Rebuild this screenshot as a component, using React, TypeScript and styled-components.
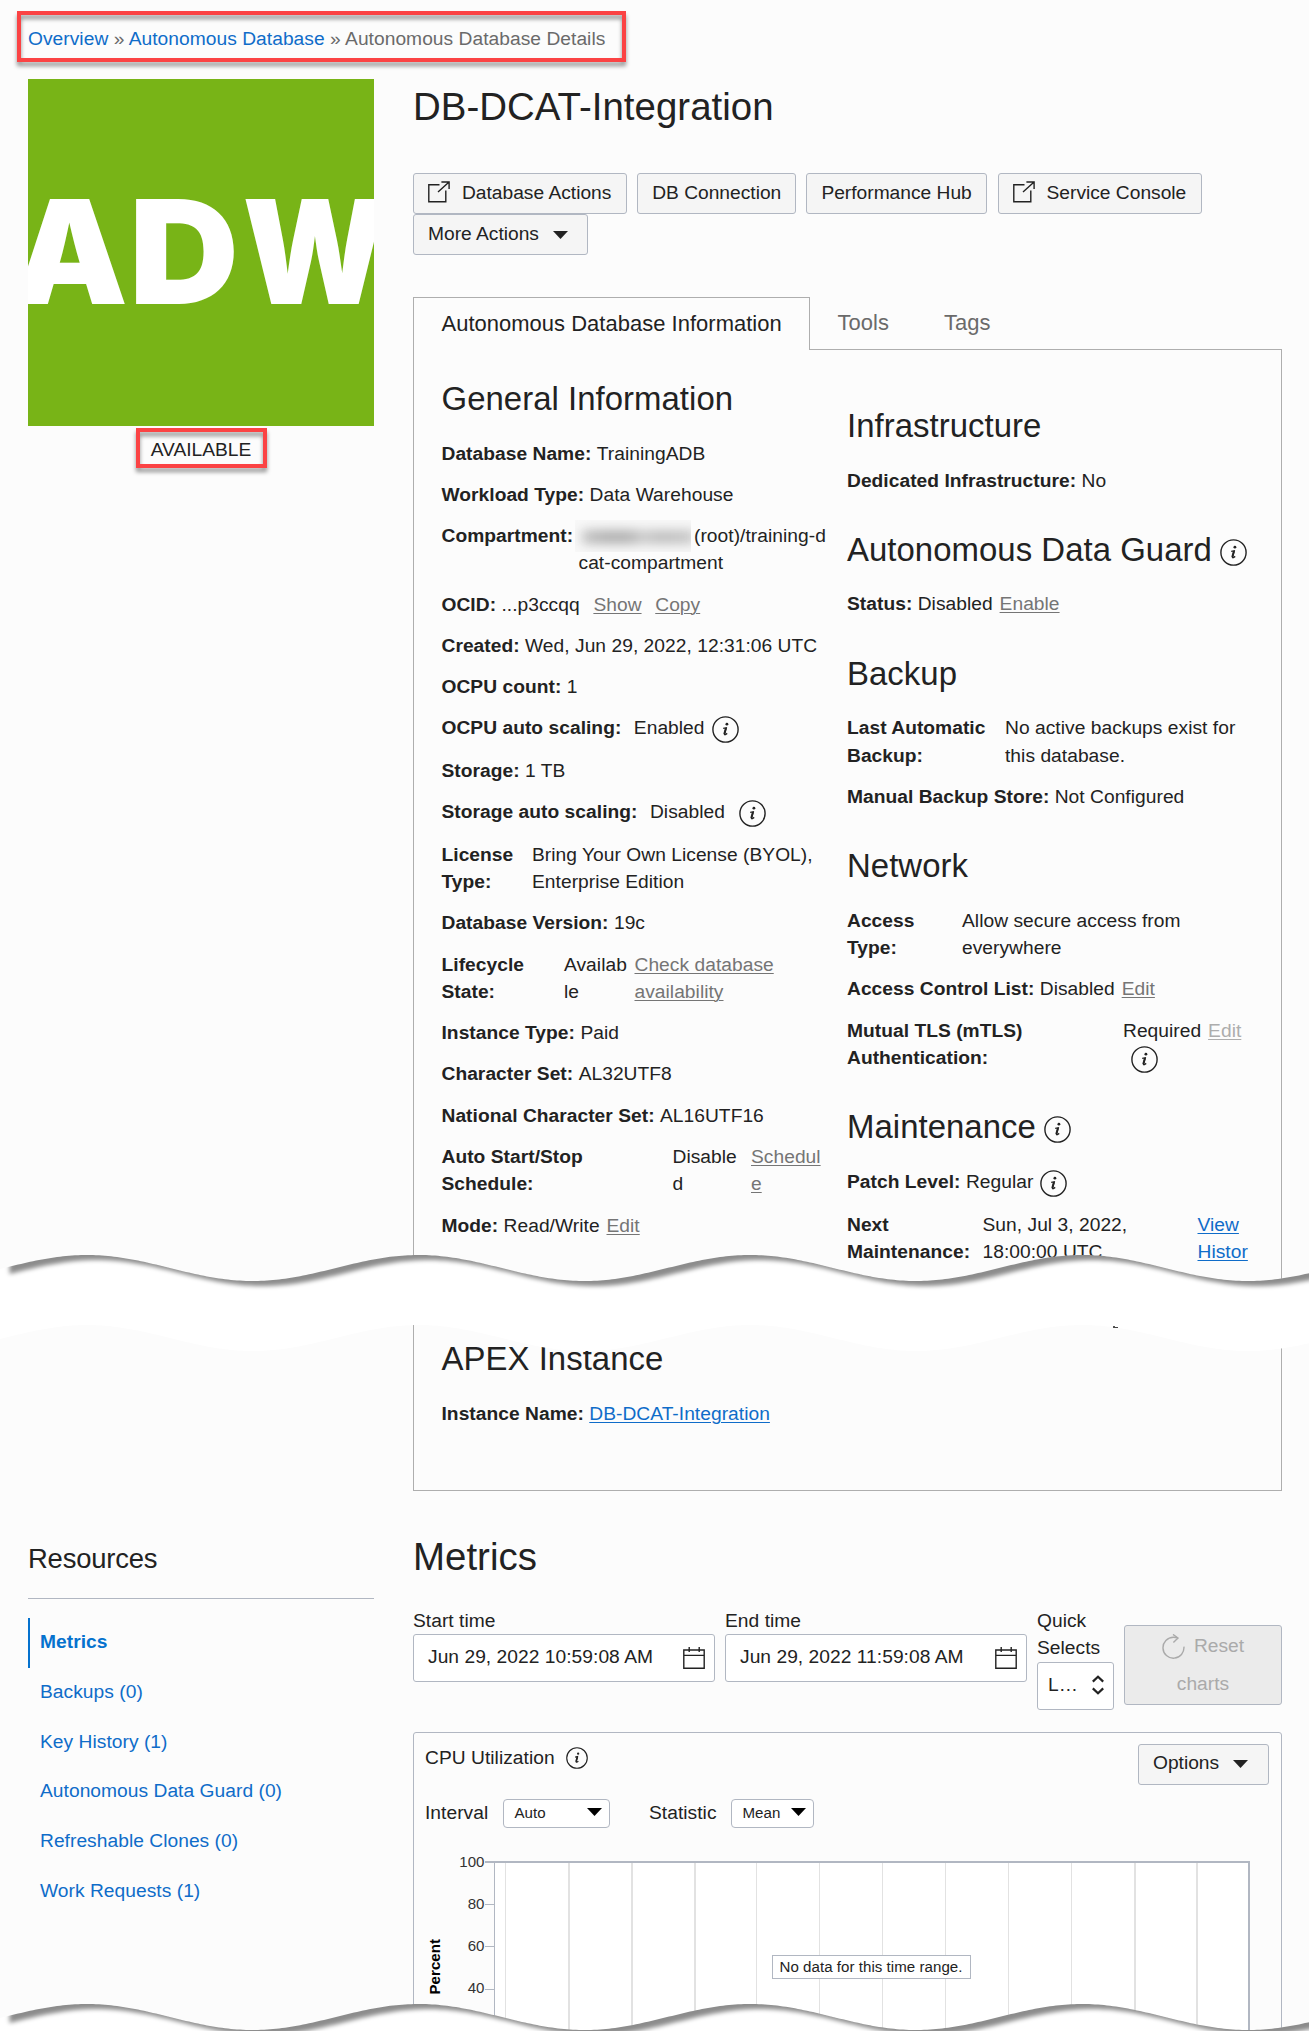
import React from "react";
import styled, { createGlobalStyle, css } from "styled-components";

const GlobalStyle = createGlobalStyle`
  *, *::before, *::after { box-sizing: border-box; }
  body {
    margin: 0;
    background: #fcfcfc;
    color: #222;
    font-family: "Liberation Sans", Arial, Helvetica, sans-serif;
    font-size: 19.2px;
    line-height: 27.5px;
    letter-spacing: 0.04px;
  }
  h1, h2, h3, p, ul { margin: 0; padding: 0; font-weight: 400; }
  button { font: inherit; color: inherit; }
`;

const LINK = "#0f6cc9";
const LINE = "#b1b7c2";

/* ---------- page frame ---------- */

const Page = styled.div`
  position: relative;
  width: 1309px;
  height: 2031px;
  padding: 25px 27px 0 28px;
  overflow: hidden;
  background: #fcfcfc;
`;

const Columns = styled.div<{ $top: number }>`
  display: grid;
  grid-template-columns: 346px 869px;
  column-gap: 39px;
  margin-top: ${(p) => p.$top}px;
`;

const highlight = css`
  content: "";
  position: absolute;
  border: 4px solid #fb4344;
  filter: drop-shadow(0 4px 2px rgba(0, 0, 0, 0.42));
  pointer-events: none;
`;

const Breadcrumb = styled.nav`
  position: relative;
  width: 578px;
  height: 27px;
  color: #6a6a6a;
  white-space: nowrap;
  &::after {
    ${highlight}
    left: -11px;
    top: -14px;
    width: 609px;
    height: 51px;
  }
`;

const Crumb = styled.a`
  color: ${LINK};
`;

/* ---------- status tile ---------- */

const Aside = styled.aside`
  display: flex;
  flex-direction: column;
  align-items: center;
`;

const Tile = styled.svg`
  display: block;
  width: 346px;
  height: 347px;
  background: #78b417;
  font-family: Inter, sans-serif;
  font-weight: 900;
  font-size: 144px;
  letter-spacing: 0;
`;

const Status = styled.div`
  position: relative;
  margin-top: 10px;
  letter-spacing: 0;
  &::after {
    ${highlight}
    left: -15px;
    top: -8px;
    width: 131px;
    height: 40px;
  }
`;

/* ---------- header & actions ---------- */

const Title = styled.h1<{ $before: number; $after: number }>`
  font-size: 38.4px;
  line-height: 46px;
  margin: ${(p) => p.$before}px 0 ${(p) => p.$after}px;
`;

const Actions = styled.div`
  display: flex;
  flex-wrap: wrap;
  align-content: flex-start;
  column-gap: 10.2px;
  height: 82px;
  margin-bottom: 42px;
`;

const Button = styled.button<{ $w: number; $pad?: number }>`
  display: inline-flex;
  align-items: center;
  width: ${(p) => p.$w}px;
  height: 41px;
  padding: 0 0 2px ${(p) => p.$pad ?? 14}px;
  border: 1px solid ${LINE};
  border-radius: 3px;
  background: #f5f5f5;
  white-space: nowrap;
`;

const LeadingIcon = styled.span`
  display: inline-flex;
  margin: -2px 12px 0 0;
`;

const TrailingIcon = styled.span`
  display: inline-flex;
  margin: 2px 0 0 14px;
`;

/* ---------- tabs & info panel ---------- */

const TabBar = styled.div`
  display: flex;
  height: 53px;
`;

const Tab = styled.div<{ $active?: boolean }>`
  padding: ${(p) => (p.$active ? "12px 28px 0 27.5px" : "12px 27.5px 0")};
  font-size: 21.94px;
  color: ${(p) => (p.$active ? "#222" : "#6a6a6a")};
  border-bottom: 1px solid #aeaeae;
  ${(p) =>
    p.$active &&
    css`
      width: 397px;
      border: 1px solid #aeaeae;
      border-bottom: none;
      white-space: nowrap;
    `}
`;

const TabFiller = styled.div`
  flex: 1;
  border-bottom: 1px solid #aeaeae;
`;

const Panel = styled.section`
  height: 1141px;
  padding: 30px 0 0 27.5px;
  border: 1px solid #aeaeae;
  border-top: none;
`;

const InfoGrid = styled.div`
  display: grid;
  grid-template-columns: 405.5px 420px;
  height: 960px;
`;

const InfoColumn = styled.div<{ $offset?: number }>`
  padding-top: ${(p) => p.$offset ?? 0}px;
`;

const SectionHeading = styled.h2<{ $first?: boolean }>`
  display: flex;
  align-items: center;
  gap: 8px;
  font-size: 32.91px;
  line-height: 37px;
  height: 37px;
  margin: ${(p) => (p.$first ? 0 : 36.8)}px 0 22.5px;
  svg { margin-top: 6px; }
`;

const Row = styled.div<{ $tall?: boolean }>`
  display: flex;
  align-items: flex-start;
  margin-bottom: 13.7px;
  white-space: nowrap;
  ${(p) =>
    p.$tall &&
    css`
      height: 29px;
      line-height: 28.6px;
    `}
`;

const Label = styled.span<{ $w?: number; $gap?: number }>`
  flex: none;
  font-weight: 700;
  width: ${(p) => (p.$w ? `${p.$w}px` : "auto")};
  margin-right: ${(p) => (p.$w ? 0 : p.$gap ?? 5.4)}px;
`;

const Value = styled.span<{ $w?: number }>`
  flex: none;
  width: ${(p) => (p.$w ? `${p.$w}px` : "auto")};
`;

const Link = styled.a<{ $tone?: "muted" | "disabled" | "link"; $gap?: number }>`
  color: ${(p) => (p.$tone === "link" ? LINK : p.$tone === "disabled" ? "#adadad" : "#757575")};
  text-decoration: underline;
  text-decoration-thickness: 1px;
  text-underline-offset: 2px;
  margin-left: ${(p) => p.$gap ?? 0}px;
`;

const Redacted = styled.span`
  display: inline-block;
  vertical-align: top;
  width: 116px;
  height: 32px;
  margin: -2px 3px -2.5px -3.5px;
  overflow: hidden;
  background: #f8f8f8;
  &::before {
    content: "";
    display: block;
    width: 112px;
    height: 14px;
    margin: 10px 0 0 7px;
    background: linear-gradient(90deg, #c4c4c4 0, #b0b0b0 20%, #b0b0b0 42%, #cacaca 54%, #bebebe 70%, #c6c6c6 100%);
    filter: blur(5.5px);
  }
`;

const IconSlot = styled.span<{ $gap: number; $top?: number }>`
  display: inline-flex;
  vertical-align: top;
  margin: ${(p) => p.$top ?? 2}px 0 -4px ${(p) => p.$gap}px;
`;

/* ---------- resources ---------- */

const ResourcesTitle = styled.h3`
  height: 66px;
  font-size: 27.43px;
  line-height: 34px;
  letter-spacing: -0.2px;
  padding-top: 9px;
  border-bottom: 1px solid ${LINE};
  margin-bottom: 19px;
`;

const ResourceList = styled.ul`
  list-style: none;
`;

const ResourceItem = styled.li<{ $active?: boolean }>`
  height: 49.7px;
  padding: 10.4px 0 0 ${(p) => (p.$active ? 10 : 12)}px;
  color: ${(p) => (p.$active ? "#0572ce" : LINK)};
  font-weight: ${(p) => (p.$active ? 700 : 400)};
  border-left: ${(p) => (p.$active ? "2px solid #0572ce" : "none")};
`;

/* ---------- metrics ---------- */

const Filters = styled.div`
  display: flex;
  align-items: flex-start;
  height: 125px;
`;

const Field = styled.label<{ $w: number }>`
  display: flex;
  flex-direction: column;
  width: ${(p) => p.$w}px;
  margin-right: 10px;
`;

const FieldBox = styled.span<{ $pad: number }>`
  display: flex;
  align-items: center;
  justify-content: space-between;
  height: 48px;
  padding: 0 9px 2px ${(p) => p.$pad}px;
  border: 1px solid ${LINE};
  border-radius: 3px;
  background: #fff;
  white-space: nowrap;
  svg { margin-top: 1px; }
`;

const ResetButton = styled.button`
  width: 158px;
  height: 80px;
  margin: 18px 0 0;
  padding: 0;
  border: 1px solid ${LINE};
  border-radius: 3px;
  background: #ebebeb;
  color: #aaa;
  line-height: 38px;
  text-align: center;
  svg { vertical-align: -7px; margin-right: 9px; }
`;

const ChartCard = styled.section`
  height: 320px;
  border: 1px solid ${LINE};
  border-radius: 3px;
`;

const ChartHeader = styled.div`
  display: flex;
  justify-content: space-between;
  height: 66px;
  padding: 11px 12px 0 11px;
`;

const ChartTitle = styled.div`
  display: flex;
  align-items: flex-start;
  gap: 11px;
  svg { margin-top: 3px; }
`;

const ChartControls = styled.div`
  display: flex;
  align-items: center;
  height: 29px;
  padding-left: 11px;
`;

const ControlName = styled.span<{ $w: number }>`
  width: ${(p) => p.$w}px;
`;

const Select = styled.span<{ $w: number; $after?: number }>`
  display: flex;
  align-items: center;
  justify-content: space-between;
  width: ${(p) => p.$w}px;
  height: 29px;
  margin-right: ${(p) => p.$after ?? 0}px;
  padding: 0 7px 0 10.5px;
  border: 1px solid ${LINE};
  border-radius: 4px;
  background: #fff;
  font-size: 15.09px;
  svg { margin-bottom: 2px; }
`;

const Chart = styled.svg`
  display: block;
  width: 867px;
  height: 203px;
  font-size: 15.09px;
`;

/* ---------- torn edges ---------- */

const Tear = styled.svg<{ $top: number }>`
  position: absolute;
  left: 0;
  top: ${(p) => p.$top}px;
  pointer-events: none;
`;

const Remnant = styled.i`
  position: absolute;
  left: 1113px;
  top: 1326px;
  width: 5px;
  height: 2px;
  border-left: 2px solid #555;
  border-bottom: 1px solid #444;
`;

/* ---------- icons ---------- */

const InfoIcon = ({ size = 27 }: { size?: number }) => (
  <svg width={size} height={size} viewBox="0 0 27 27" fill="none" stroke="#222">
    <circle cx="13.5" cy="13.5" r="12.6" strokeWidth="1.4" />
    <circle cx="14.9" cy="8.2" r="1.4" fill="#222" stroke="none" />
    <path d="M11.2 12.4l3-.6-1.7 6.1c-.2.9.4 1.1 1.2.6l1.5-1.1" strokeWidth="1.4" />
    <path d="M14 12l-1.7 6" strokeWidth="2" />
  </svg>
);

const ExternalIcon = () => (
  <svg width="22" height="22" viewBox="0 0 22 22" fill="none" stroke="#222" strokeWidth="1.4">
    <path d="M11.5 3.7H.8v17h17V9.5" />
    <path d="M10 11L20.8 1.2M13.4 1h7.7v7" />
  </svg>
);

const Caret = ({ color = "#222" }: { color?: string }) => (
  <svg width="15" height="8" viewBox="0 0 15 8">
    <path d="M0 0h15L7.5 8z" fill={color} />
  </svg>
);

const CalendarIcon = () => (
  <svg width="22" height="22" viewBox="0 0 22 22" fill="none" stroke="#222" strokeWidth="1.4">
    <path d="M.8 3h20.4v18.2H.8zM.8 8.4h20.4M6.2 0v5M16.2 0v5" />
  </svg>
);

const SortIcon = () => (
  <svg width="12" height="20" viewBox="0 0 12 20" fill="none" stroke="#222" strokeWidth="2.2">
    <path d="M.8 6.6L6 1.8l5.2 4.8M.8 13.4L6 18.2l5.2-4.8" />
  </svg>
);

const ResetIcon = () => (
  <svg width="23" height="25" viewBox="0 0 23 25" fill="none" stroke="#aaa" strokeWidth="1.4">
    <path d="M21.9 12.6A10.5 10.5 0 1 1 11.4 3.2c1.5 0 3 .3 4.2.7" />
    <path d="M11 .4l5 3.6-4.6 4.6" />
  </svg>
);

/* ---------- torn edge geometry ---------- */

const PERIOD = 331.7;
const wave = (mid: number, from = 0, to = 1309) => {
  const points: string[] = [];
  for (let x = from; x <= to; x += 3) {
    points.push(`${x} ${(mid - 13 * Math.cos((2 * Math.PI * (x - 87)) / PERIOD)).toFixed(2)}`);
  }
  return points;
};

type TornEdgeProps = { top: number; height: number; mid: number; lower?: number; id: string };

const TornEdge = ({ top, height, mid, lower, id }: TornEdgeProps) => {
  const upper = wave(mid, 0, 1311);
  const floor = lower === undefined ? [`1311 ${height}`, `0 ${height}`] : wave(lower, 0, 1311).reverse();
  const area = `M${upper.join("L")}L${floor.join("L")}Z`;
  const sheet = `M0 -40L${wave(mid, 0, 1341).join("L")}L1341 -40Z`;
  return (
    <Tear $top={top} width="1309" height={height} viewBox={`0 0 1309 ${height}`}>
      <defs>
        <clipPath id={`${id}-clip`}>
          <path d={area} />
        </clipPath>
        <filter id={`${id}-soft`} x="-5%" y="-30%" width="110%" height="160%">
          <feGaussianBlur stdDeviation="1.9" />
        </filter>
      </defs>
      <path d={area} fill="#fff" />
      <g clipPath={`url(#${id}-clip)`}>
        <path d={sheet} transform="translate(9.5 5)" fill="#000" fillOpacity="0.45" filter={`url(#${id}-soft)`} />
      </g>
    </Tear>
  );
};

/* ---------- data ---------- */

const RESOURCES = [
  "Metrics",
  "Backups (0)",
  "Key History (1)",
  "Autonomous Data Guard (0)",
  "Refreshable Clones (0)",
  "Work Requests (1)",
];

const Plain = ({ label, children }: { label: string; children: React.ReactNode }) => (
  <Row>
    <Label>{label}</Label>
    <Value>{children}</Value>
  </Row>
);

const LaunchButton = ({ width, children }: { width: number; children: React.ReactNode }) => (
  <Button $w={width}>
    <LeadingIcon>
      <ExternalIcon />
    </LeadingIcon>
    {children}
  </Button>
);

const MenuButton = ({ width, children }: { width: number; children: React.ReactNode }) => (
  <Button $w={width}>
    {children}
    <TrailingIcon>
      <Caret />
    </TrailingIcon>
  </Button>
);

const DateField = ({ label, value }: { label: string; value: string }) => (
  <Field $w={302}>
    {label}
    <FieldBox $pad={14}>
      {value}
      <CalendarIcon />
    </FieldBox>
  </Field>
);

const UtilizationChart = () => (
  <Chart viewBox="0 0 867 203">
    <rect x="81" y="34" width="754" height="169" fill="#fff" />
    {Array.from({ length: 12 }, (_, i) => (
      <rect
        key={i}
        x={Math.round(91 + i * 62.85)}
        y="35"
        width={[1, 2, 3, 10, 11].includes(i) ? 2 : 1}
        height="168"
        fill="#e2e2e2"
      />
    ))}
    {[100, 80, 60, 40].map((tick, i) => (
      <g key={tick}>
        <text x="70.5" y={38.7 + i * 42.2} textAnchor="end" fill="#333">
          {tick}
        </text>
        <rect x="71" y={Math.round(34 + i * 42.2)} width="10" height="1" fill={LINE} />
      </g>
    ))}
    <rect x="80" y="34" width="1" height="169" fill={LINE} />
    <rect x="71" y="33" width="765" height="2" fill={LINE} />
    <rect x="834" y="33" width="2" height="170" fill={LINE} />
    <text transform="translate(25.5 166.5) rotate(-90)" fontWeight="700" fill="#000">
      Percent
    </text>
    <rect x="358.5" y="127.5" width="198" height="23" fill="#fff" stroke={LINE} />
    <text x="365.5" y="143.8" fill="#222">
      No data for this time range.
    </text>
  </Chart>
);

export default function App() {
  return (
    <Page>
      <GlobalStyle />
      <Breadcrumb>
        <Crumb>Overview</Crumb> » <Crumb>Autonomous Database</Crumb> » Autonomous Database Details
      </Breadcrumb>

      <Columns $top={27}>
        <Aside>
          <Tile viewBox="0 0 346 347">
            <text y="225" fill="#fff">
              <tspan x="-15.5" textLength="115.5" lengthAdjust="spacingAndGlyphs">A</tspan>
              <tspan x="101" textLength="110" lengthAdjust="spacingAndGlyphs">D</tspan>
              <tspan x="214.5" textLength="145" lengthAdjust="spacingAndGlyphs">W</tspan>
            </text>
          </Tile>
          <Status>AVAILABLE</Status>
        </Aside>

        <main>
          <Title $before={5} $after={43}>
            DB-DCAT-Integration
          </Title>
          <Actions>
            <LaunchButton width={214}>Database Actions</LaunchButton>
            <Button $w={159}>DB Connection</Button>
            <Button $w={181}>Performance Hub</Button>
            <LaunchButton width={204}>Service Console</LaunchButton>
            <MenuButton width={175}>More Actions</MenuButton>
          </Actions>

          <TabBar>
            <Tab $active>Autonomous Database Information</Tab>
            <Tab>Tools</Tab>
            <Tab>Tags</Tab>
            <TabFiller />
          </TabBar>
          <Panel>
            <InfoGrid>
              <InfoColumn>
                <SectionHeading $first>General Information</SectionHeading>
                <Plain label="Database Name:">TrainingADB</Plain>
                <Plain label="Workload Type:">Data Warehouse</Plain>
                <Row>
                  <Label>Compartment:</Label>
                  <Value>
                    <Redacted />
                    (root)/training-d
                    <br />
                    cat-compartment
                  </Value>
                </Row>
                <Row>
                  <Label>OCID:</Label>
                  <Value>...p3ccqq</Value>
                  <Link $gap={13.7}>Show</Link>
                  <Link $gap={13.7}>Copy</Link>
                </Row>
                <Plain label="Created:">Wed, Jun 29, 2022, 12:31:06 UTC</Plain>
                <Plain label="OCPU count:">1</Plain>
                <Row $tall>
                  <Label $gap={12.5}>OCPU auto scaling:</Label>
                  <Value>Enabled</Value>
                  <IconSlot $gap={7}>
                    <InfoIcon />
                  </IconSlot>
                </Row>
                <Plain label="Storage:">1 TB</Plain>
                <Row $tall>
                  <Label $gap={12.5}>Storage auto scaling:</Label>
                  <Value>Disabled</Value>
                  <IconSlot $gap={14}>
                    <InfoIcon />
                  </IconSlot>
                </Row>
                <Row>
                  <Label $w={90.5}>
                    License
                    <br />
                    Type:
                  </Label>
                  <Value>
                    Bring Your Own License (BYOL),
                    <br />
                    Enterprise Edition
                  </Value>
                </Row>
                <Plain label="Database Version:">19c</Plain>
                <Row>
                  <Label $w={122.5}>
                    Lifecycle
                    <br />
                    State:
                  </Label>
                  <Value $w={70.5}>
                    Availab
                    <br />
                    le
                  </Value>
                  <Link>
                    Check database
                    <br />
                    availability
                  </Link>
                </Row>
                <Plain label="Instance Type:">Paid</Plain>
                <Plain label="Character Set:">AL32UTF8</Plain>
                <Plain label="National Character Set:">AL16UTF16</Plain>
                <Row>
                  <Label $w={231}>
                    Auto Start/Stop
                    <br />
                    Schedule:
                  </Label>
                  <Value $w={78.5}>
                    Disable
                    <br />d
                  </Value>
                  <Link>
                    Schedul
                    <br />e
                  </Link>
                </Row>
                <Row>
                  <Label>Mode:</Label>
                  <Value>Read/Write</Value>
                  <Link $gap={6.9}>Edit</Link>
                </Row>
              </InfoColumn>

              <InfoColumn $offset={27.2}>
                <SectionHeading $first>Infrastructure</SectionHeading>
                <Plain label="Dedicated Infrastructure:">No</Plain>

                <SectionHeading>
                  Autonomous Data Guard
                  <InfoIcon />
                </SectionHeading>
                <Row>
                  <Label>Status:</Label>
                  <Value>Disabled</Value>
                  <Link $gap={6.9}>Enable</Link>
                </Row>

                <SectionHeading>Backup</SectionHeading>
                <Row>
                  <Label $w={158}>
                    Last Automatic
                    <br />
                    Backup:
                  </Label>
                  <Value>
                    No active backups exist for
                    <br />
                    this database.
                  </Value>
                </Row>
                <Plain label="Manual Backup Store:">Not Configured</Plain>

                <SectionHeading>Network</SectionHeading>
                <Row>
                  <Label $w={115}>
                    Access
                    <br />
                    Type:
                  </Label>
                  <Value>
                    Allow secure access from
                    <br />
                    everywhere
                  </Value>
                </Row>
                <Row>
                  <Label>Access Control List:</Label>
                  <Value>Disabled</Value>
                  <Link $gap={6.9}>Edit</Link>
                </Row>
                <Row>
                  <Label $w={276}>
                    Mutual TLS (mTLS)
                    <br />
                    Authentication:
                  </Label>
                  <Value>
                    Required
                    <Link $tone="disabled" $gap={6.9}>
                      Edit
                    </Link>
                    <br />
                    <IconSlot $gap={8}>
                      <InfoIcon />
                    </IconSlot>
                  </Value>
                </Row>

                <SectionHeading>
                  Maintenance
                  <InfoIcon />
                </SectionHeading>
                <Row $tall>
                  <Label>Patch Level:</Label>
                  <Value>Regular</Value>
                  <IconSlot $gap={7}>
                    <InfoIcon />
                  </IconSlot>
                </Row>
                <Row>
                  <Label $w={135.5}>
                    Next
                    <br />
                    Maintenance:
                  </Label>
                  <Value $w={215}>
                    Sun, Jul 3, 2022,
                    <br />
                    18:00:00 UTC
                  </Value>
                  <Link $tone="link">
                    View
                    <br />
                    Histor
                  </Link>
                </Row>
              </InfoColumn>
            </InfoGrid>
            <SectionHeading $first>APEX Instance</SectionHeading>
            <Row>
              <Label>Instance Name:</Label>
              <Link $tone="link">DB-DCAT-Integration</Link>
            </Row>
          </Panel>
        </main>
      </Columns>

      <Columns $top={42}>
        <aside>
          <ResourcesTitle>Resources</ResourcesTitle>
          <ResourceList>
            {RESOURCES.map((name, i) => (
              <ResourceItem key={name} $active={i === 0}>
                {name}
              </ResourceItem>
            ))}
          </ResourceList>
        </aside>
        <section>
          <Title $before={1} $after={26.5}>
            Metrics
          </Title>
          <Filters>
            <DateField label="Start time" value="Jun 29, 2022 10:59:08 AM" />
            <DateField label="End time" value="Jun 29, 2022 11:59:08 AM" />
            <Field $w={77}>
              Quick Selects
              <FieldBox $pad={10}>
                L…
                <SortIcon />
              </FieldBox>
            </Field>
            <ResetButton>
              <ResetIcon />
              Reset
              <br />
              charts
            </ResetButton>
          </Filters>
          <ChartCard>
            <ChartHeader>
              <ChartTitle>
                CPU Utilization
                <InfoIcon size={22} />
              </ChartTitle>
              <MenuButton width={131}>Options</MenuButton>
            </ChartHeader>
            <ChartControls>
              <ControlName $w={78}>Interval</ControlName>
              <Select $w={107} $after={39}>
                Auto
                <Caret color="#000" />
              </Select>
              <ControlName $w={82}>Statistic</ControlName>
              <Select $w={83}>
                Mean
                <Caret color="#000" />
              </Select>
            </ChartControls>
            <UtilizationChart />
          </ChartCard>
        </section>
      </Columns>

      <TornEdge id="upper" top={1240} height={120} mid={28} lower={98} />
      <TornEdge id="lower" top={1990} height={41} mid={27} />
      <Remnant />
    </Page>
  );
}
